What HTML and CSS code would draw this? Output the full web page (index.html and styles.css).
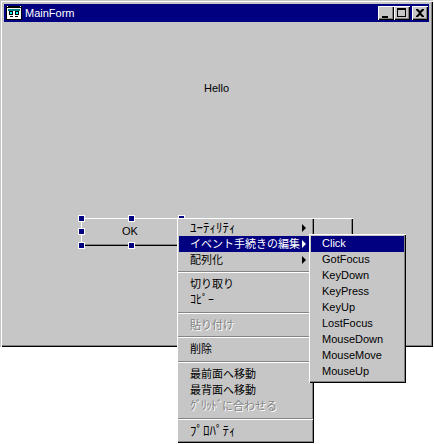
FILE: index.html
```html
<!DOCTYPE html>
<html lang="ja">
<head>
<meta charset="utf-8">
<title>MainForm</title>
<link rel="stylesheet" href="styles.css">
</head>
<body>
<div class="window">
  <div class="titlebar">
    <svg class="app-icon" width="16" height="14" viewBox="0 0 16 14">
      <rect x="0" y="0" width="16" height="14" fill="#000"/>
      <rect x="1" y="2" width="14" height="11" fill="#fff"/>
      <rect x="2" y="3" width="12" height="2" fill="#008080"/>
      <rect x="1" y="0" width="1" height="1" fill="#fff"/><rect x="14" y="0" width="1" height="1" fill="#fff"/>
      <rect x="3" y="5" width="4" height="4" fill="#000"/><rect x="4" y="6" width="2" height="2" fill="#0ff"/>
      <rect x="9" y="5" width="4" height="4" fill="#000"/><rect x="10" y="6" width="2" height="2" fill="#0ff"/>
      <rect x="4" y="10" width="3" height="1" fill="#000"/><rect x="9" y="10" width="3" height="1" fill="#000"/>
    </svg>
    <span class="title">MainForm</span>
    <div class="controls">
      <button class="ctl"><svg width="16" height="14" viewBox="0 0 16 14"><rect x="4" y="10" width="6" height="2" fill="#000"/></svg></button>
      <button class="ctl"><svg width="16" height="14" viewBox="0 0 16 14"><path d="M3 2h9v9H3z M4 4v6h7V4z" fill="#000" fill-rule="evenodd"/></svg></button>
      <button class="ctl ctl-close"><svg width="16" height="14" viewBox="0 0 16 14"><path d="M4 3h2l2 2 2-2h2v1l-3 3 3 3v1h-2L8 9l-2 2H4v-1l3-3-3-3z" fill="#000"/></svg></button>
    </div>
  </div>
  <div class="client">
    <span class="hello">Hello</span>
    <div class="design-btn btn-ok">OK</div>
    <div class="design-btn btn-other"></div>
    <i class="handle h1"></i><i class="handle h2"></i><i class="handle h3"></i>
    <i class="handle h4"></i><i class="handle h5"></i><i class="handle h6"></i>
  </div>
</div>

<div class="menu main-menu">
  <div class="item"><span class="kana-lg">ﾕｰﾃｨﾘﾃｨ</span><i class="arrow"></i></div>
  <div class="item active"><span>イベント手続きの編集</span><i class="arrow"></i></div>
  <div class="item"><span>配列化</span><i class="arrow"></i></div>
  <div class="sep sep-short"></div>
  <div class="item"><span>切り取り</span></div>
  <div class="item"><span class="kana-md">ｺﾋﾟｰ</span></div>
  <div class="sep"></div>
  <div class="item disabled"><span>貼り付け</span></div>
  <div class="sep sep-short"></div>
  <div class="item"><span>削除</span></div>
  <div class="sep"></div>
  <div class="item"><span>最前面へ移動</span></div>
  <div class="item"><span>最背面へ移動</span></div>
  <div class="item disabled"><span><span class="kana-tight">ｸﾞﾘｯﾄﾞ</span>に合わせる</span></div>
  <div class="sep"></div>
  <div class="item"><span class="kana-lg">ﾌﾟﾛﾊﾟﾃｨ</span></div>
</div>

<div class="menu sub-menu">
  <div class="item active"><span>Click</span></div>
  <div class="item"><span>GotFocus</span></div>
  <div class="item"><span>KeyDown</span></div>
  <div class="item"><span>KeyPress</span></div>
  <div class="item"><span>KeyUp</span></div>
  <div class="item"><span>LostFocus</span></div>
  <div class="item"><span>MouseDown</span></div>
  <div class="item"><span>MouseMove</span></div>
  <div class="item"><span>MouseUp</span></div>
</div>
</body>
</html>
```

FILE: styles.css
```css
* { box-sizing: border-box; }
html, body { margin: 0; padding: 0; }
body {
  position: relative;
  width: 434px;
  height: 444px;
  overflow: hidden;
  background: #fff;
  font: 11px/16px "Liberation Sans", "Noto Sans CJK JP", sans-serif;
  color: #000;
}
.window {
  width: 433px;
  height: 347px;
  padding: 4px;
  display: flex;
  flex-direction: column;
  background: #c6c6c6;
  box-shadow: inset 1px 1px 0 #c6c6c6, inset 2px 2px 0 #fff, inset -1px -1px 0 #000, inset -2px -2px 0 #848484;
}
.titlebar {
  height: 18px;
  background: #000080;
  color: #fff;
  display: flex;
  align-items: center;
  padding-left: 2px;
  flex: none;
}
.app-icon { flex: none; }
.title { margin-left: 3px; }
.controls { margin-left: auto; margin-right: 1px; display: flex; }
.ctl {
  width: 16px;
  height: 14px;
  padding: 0;
  border: 0;
  background: #c6c6c6;
  box-shadow: inset 1px 1px 0 #fff, inset -1px -1px 0 #000, inset -2px -2px 0 #848484;
  display: block;
}
.ctl svg { display: block; }
.ctl-close { margin-left: 2px; }
.client { position: relative; flex: 1; }
.hello { position: absolute; left: 200px; top: 58px; }
.design-btn {
  position: absolute;
  background: #c6c6c6;
  text-align: center;
  box-shadow: inset 1px 1px 0 #fff, inset -1px -1px 0 #000, inset -2px -2px 0 #848484;
}
.btn-ok { left: 77px; top: 196px; width: 98px; height: 28px; line-height: 27px; }
.btn-other { left: 250px; top: 196px; width: 99px; height: 28px; }
.handle {
  position: absolute;
  width: 7px;
  height: 7px;
  background: #000080;
  border: 1px solid #fff;
}
.h1 { left: 74px; top: 193px; }
.h2 { left: 124px; top: 193px; }
.h3 { left: 174px; top: 193px; }
.h4 { left: 74px; top: 206px; }
.h5 { left: 74px; top: 220px; }
.h6 { left: 124px; top: 220px; }
.menu {
  position: absolute;
  background: #c6c6c6;
  padding: 2px;
  box-shadow: inset 1px 1px 0 #fff, inset -1px -1px 0 #000, inset -2px -2px 0 #848484;
}
.main-menu { left: 177px; top: 218px; width: 137px; height: 225px; }
.sub-menu { left: 309px; top: 234px; width: 97px; height: 149px; }
.item {
  height: 16px;
  display: flex;
  align-items: center;
  justify-content: space-between;
  padding: 0 6px 0 11px;
  white-space: nowrap;
}
.sub-menu .item span { position: relative; top: -1px; }
.kana-lg { font-size: 13px; }
.kana-md { font-size: 12px; }
.kana-tight { font-size: 12px; letter-spacing: -1px; }
.active { background: #000080; color: #fff; }
.disabled { color: #848484; text-shadow: 1px 1px 0 #fff; }
.arrow {
  width: 0;
  height: 0;
  border-left: 4px solid #000;
  border-top: 4px solid transparent;
  border-bottom: 4px solid transparent;
}
.active .arrow { border-left-color: #fff; }
.sep { height: 9px; padding-top: 4px; margin: 0 -1px; }
.sep::before {
  content: "";
  display: block;
  height: 2px;
  background: linear-gradient(#848484 50%, #fff 50%);
}
.sep-short { height: 8px; padding-top: 3px; }
```
